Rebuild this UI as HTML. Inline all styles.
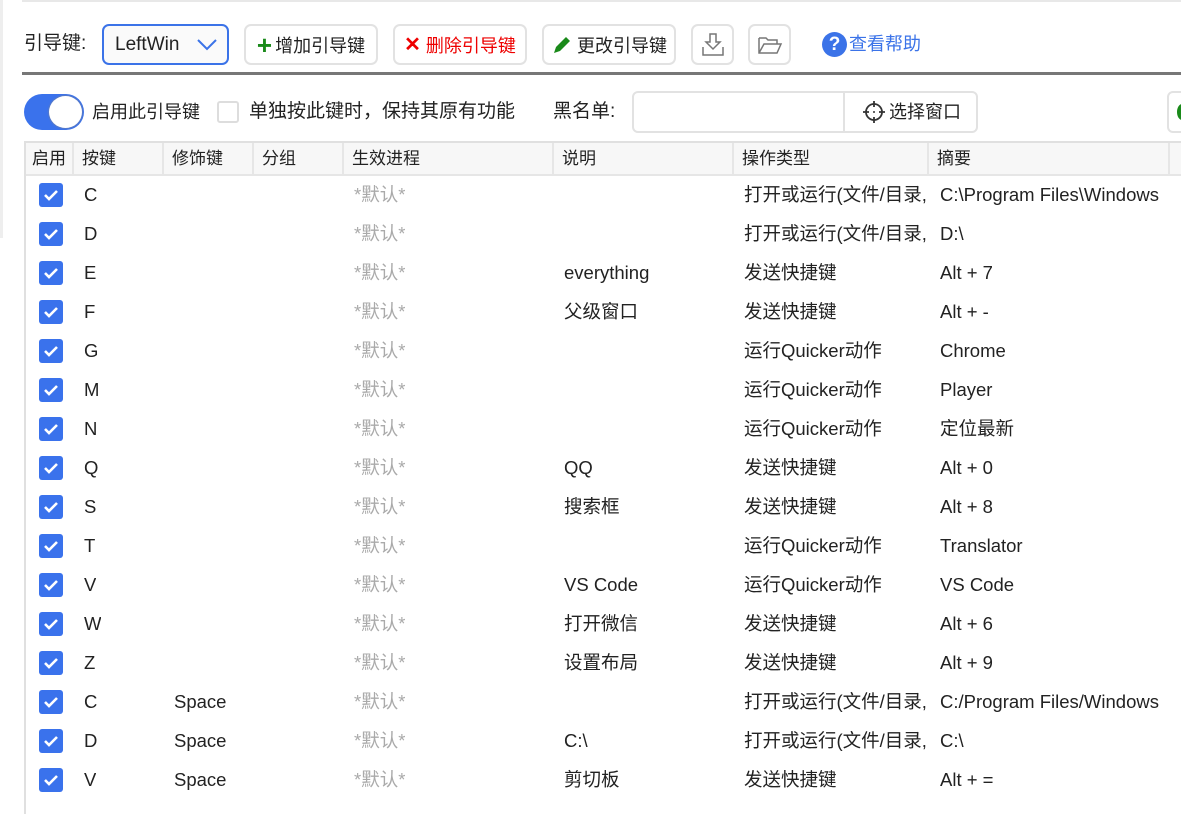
<!DOCTYPE html>
<html><head><meta charset="utf-8"><style>
*{box-sizing:border-box;margin:0;padding:0}
body{width:1181px;height:814px;background:#fff;position:relative;overflow:hidden;font-family:"Liberation Sans","Noto Sans CJK SC",sans-serif;color:#222;font-size:18px}
.a{position:absolute}
.btn{position:absolute;top:24px;height:41px;border:2px solid #e2e2e2;border-radius:7px;background:#fff;display:flex;align-items:center;justify-content:center;font-size:18px}
.hd{position:absolute;top:143px;height:33px;background:#f7f7f7;border-right:2px solid #e6e6e6;border-bottom:2px solid #e6e6e6;font-size:17px;padding-left:8px;line-height:31px}
.row{position:absolute;left:26px;height:39px;width:1155px}
.row span{position:absolute;top:0;line-height:39px;font-size:18.5px;white-space:nowrap;overflow:hidden}
.cb{position:absolute;left:13px;top:8px;width:24px;height:24px;background:#3a72ec;border-radius:3px}
.g{color:#aaa}
</style></head><body>
<div class="a" style="left:0;top:0;width:3px;height:238px;background:#eee"></div>
<div class="a" style="left:22px;top:0;width:1159px;height:2px;background:#e8e8e8"></div>
<div class="a" style="left:24px;top:30px;line-height:28px;font-size:19px">引导键:</div>
<div class="btn" style="left:102px;width:127px;border-color:#3b73e8;justify-content:flex-start;padding-left:11px;background:#fafafa;font-size:19px">LeftWin
<svg class="a" style="left:92px;top:12px" width="22" height="14"><path d="M2 2l9 9 9-9" stroke="#3b73e8" stroke-width="2" fill="none"/></svg></div>
<div class="btn" style="left:244px;width:134px"><span style="color:#1a8a1a;font-size:26px;font-weight:bold;margin-right:3px;line-height:20px">+</span>增加引导键</div>
<div class="btn" style="left:393px;width:134px;color:#e00"><span style="font-weight:bold;font-size:20px;margin-right:5px">✕</span>删除引导键</div>
<div class="btn" style="left:542px;width:134px"><svg width="22" height="22" style="margin-right:4px"><path d="M3 19l2-6L15 3l4 4L9 17z" fill="#1a8a1a"/></svg>更改引导键</div>
<div class="btn" style="left:691px;width:43px"><svg width="26" height="26"><path d="M10 2h6v8h4l-7 7-7-7h4z M3 15v8h20v-8" stroke="#777" stroke-width="1.5" fill="none"/></svg></div>
<div class="btn" style="left:748px;width:43px"><svg width="26" height="22"><path d="M2 4h7l2 2h9v4 M2 4v15h18l4-9H7l-5 9" stroke="#777" stroke-width="1.5" fill="none"/></svg></div>
<div class="a" style="left:822px;top:32px;width:25px;height:25px;border-radius:50%;background:#3b73e8;color:#fff;font-weight:bold;text-align:center;line-height:25px;font-size:19px">?</div>
<div class="a" style="left:849px;top:30px;color:#3b73e8;line-height:28px">查看帮助</div>
<div class="a" style="left:22px;top:72px;width:1159px;height:3px;background:#777"></div>
<div class="a" style="left:24px;top:94px;width:60px;height:36px;border-radius:18px;background:#3a72ec"></div>
<div class="a" style="left:49px;top:96px;width:33px;height:32px;border-radius:50%;background:#fff;box-shadow:0 0 2px #888"></div>
<div class="a" style="left:92px;top:98px;line-height:28px">启用此引导键</div>
<div class="a" style="left:217px;top:101px;width:22px;height:22px;border:2px solid #ddd;border-radius:3px"></div>
<div class="a" style="left:249px;top:98px;line-height:28px;font-size:19px">单独按此键时，保持其原有功能</div>
<div class="a" style="left:553px;top:98px;line-height:28px;font-size:19px">黑名单:</div>
<div class="a" style="left:632px;top:91px;width:346px;height:42px;border:2px solid #e2e2e2;border-radius:6px"></div>
<div class="a" style="left:843px;top:92px;width:2px;height:40px;background:#e2e2e2"></div>
<svg class="a" style="left:862px;top:100px" width="24" height="24"><circle cx="12" cy="12" r="8" stroke="#333" stroke-width="1.8" fill="none"/><path d="M12 1v6M12 17v6M1 12h6M17 12h6" stroke="#333" stroke-width="1.8"/><circle cx="12" cy="12" r="1" fill="#333"/></svg>
<div class="a" style="left:889px;top:98px;line-height:28px">选择窗口</div>
<div class="a" style="left:1167px;top:91px;width:30px;height:42px;border:2px solid #e2e2e2;border-radius:6px"></div>
<div class="a" style="left:1177px;top:104px;width:10px;height:16px;border-radius:50%;background:#1a8a1a"></div>
<div class="a" style="left:24px;top:141px;width:1157px;height:2px;background:#e0e0e0"></div>
<div class="a" style="left:24px;top:141px;width:2px;height:673px;background:#e0e0e0"></div>
<div class="hd" style="left:26px;width:48px;padding-left:6px">启用</div>
<div class="hd" style="left:74px;width:90px">按键</div>
<div class="hd" style="left:164px;width:90px">修饰键</div>
<div class="hd" style="left:254px;width:90px">分组</div>
<div class="hd" style="left:344px;width:210px">生效进程</div>
<div class="hd" style="left:554px;width:180px">说明</div>
<div class="hd" style="left:734px;width:195px">操作类型</div>
<div class="hd" style="left:929px;width:241px">摘要</div>
<div class="hd" style="left:1170px;width:20px"></div>
<div id="rows"></div>
<script>
const d=[["C","","","打开或运行(文件/目录,","C:\\Program Files\\Windows"],["D","","","打开或运行(文件/目录,","D:\\"],["E","","everything","发送快捷键","Alt + 7"],["F","","父级窗口","发送快捷键","Alt + -"],["G","","","运行Quicker动作","Chrome"],["M","","","运行Quicker动作","Player"],["N","","","运行Quicker动作","定位最新"],["Q","","QQ","发送快捷键","Alt + 0"],["S","","搜索框","发送快捷键","Alt + 8"],["T","","","运行Quicker动作","Translator"],["V","","VS Code","运行Quicker动作","VS Code"],["W","","打开微信","发送快捷键","Alt + 6"],["Z","","设置布局","发送快捷键","Alt + 9"],["C","Space","","打开或运行(文件/目录,","C:/Program Files/Windows"],["D","Space","C:\\","打开或运行(文件/目录,","C:\\"],["V","Space","剪切板","发送快捷键","Alt + ="]];
let h="";d.forEach((r,i)=>{h+=`<div class="row" style="top:${175+i*39}px"><div class="cb"><svg width="24" height="24"><path d="M6 12l4 4 8-8" stroke="#fff" stroke-width="2.6" fill="none"/></svg></div><span style="left:58px">${r[0]}</span><span style="left:148px">${r[1]}</span><span class="g" style="left:328px">*默认*</span><span style="left:538px">${r[2]}</span><span style="left:718px;width:186px">${r[3]}</span><span style="left:914px;width:222px">${r[4]}</span></div>`});
document.getElementById("rows").innerHTML=h;
</script>
</body></html>
